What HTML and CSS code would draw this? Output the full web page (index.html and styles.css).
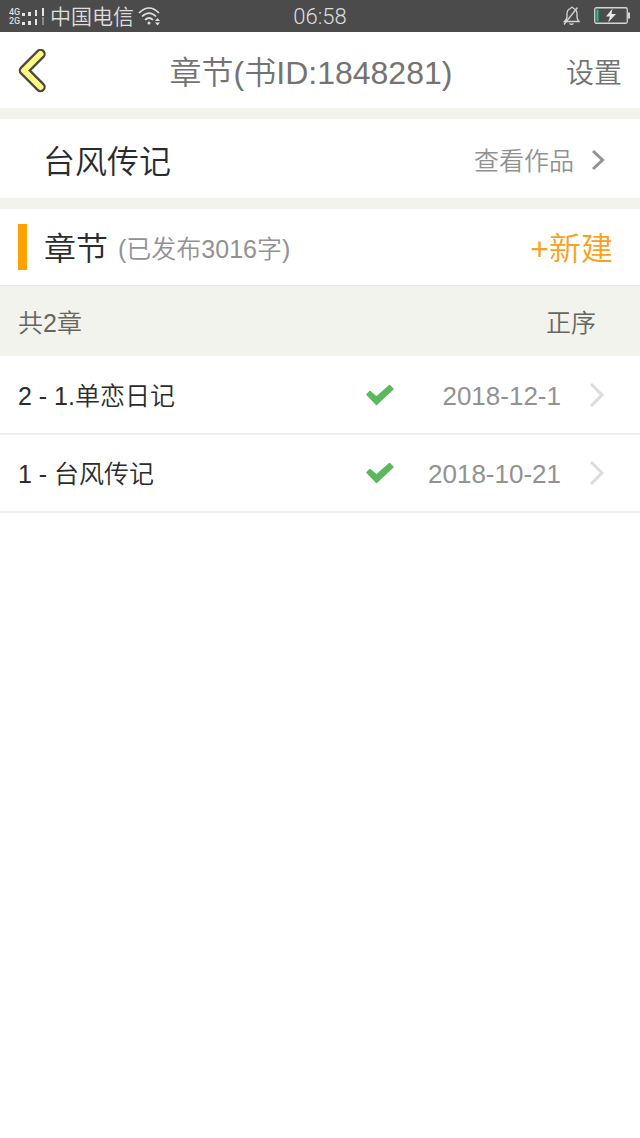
FILE: index.html
```html
<!DOCTYPE html>
<html lang="zh-CN">
<head>
<meta charset="utf-8">
<meta name="viewport" content="width=device-width, initial-scale=1">
<title>章节</title>
<link rel="stylesheet" href="styles.css">
</head>
<body>
<div class="status">
  <div class="status-left">
    <div class="networks">
      <div class="network"><span>4G</span><svg width="23" height="8" viewBox="0 0 23 8" fill="#e4e4e4"><path d="M0 5h3v3H0zM6 4h3v4H6zM13 2h2v6h-2zM20 0h2v8h-2z"/></svg></div>
      <div class="network"><span>2G</span><svg width="23" height="8" viewBox="0 0 23 8" fill="#e4e4e4"><path d="M0 5h3v3H0zM6 4h3v4H6zM13 2h2v6h-2z"/><path d="M20 0h2v8h-2z" opacity=".4"/></svg></div>
    </div>
    <span class="carrier">中国电信</span>
    <svg class="wifi" width="23" height="20" viewBox="0 0 23 20" fill="none" stroke="#dedede" stroke-width="1.7"><path d="M1 7Q11 -3 21 7M4 10.500Q11 3.500 18 10.500M7 14Q11 10 15 14"/><circle cx="11" cy="17" r="1.500" fill="#dedede" stroke="none"/><path d="M17 15l2.500-3 2.500 3zM17 16.500l2.500 3 2.500-3z" fill="#dedede" stroke="none"/></svg>
  </div>
  <span class="time">06:58</span>
  <div class="status-right">
    <svg width="18" height="20" viewBox="0 0 18 20" fill="none" stroke="#d5d5d5" stroke-width="1.300"><path d="M1.500 15.500h14.500q-1.500-2-2-4V8q0-4.500-3.500-5.500Q9-.2 7.500 2.500 4 3.500 4 8v3.500q-.5 2-2.500 4zM6.500 17.500q2 1.500 4 0M1 18.500L14.500 1.500"/></svg>
    <svg width="37" height="18" viewBox="0 0 37 18"><rect x=".75" y=".75" width="32.500" height="15.500" rx="1.500" fill="none" stroke="#d5d5d5" stroke-width="1.300"/><path d="M34 5.500h2v6h-2z" fill="#d5d5d5"/><path d="M2.500 2.500h2v12h-2z" fill="#27c08b"/><path d="M18.500 1.500L12 9.500h4L14 15.500l8-8.500h-4.500z" fill="#e8e8e8"/></svg>
  </div>
</div>
<header class="header">
  <button class="back" type="button" aria-label="返回"><svg width="28" height="46" viewBox="0 0 28 46" fill="none" stroke-linecap="round" stroke-linejoin="round"><path d="M22.500 5L6 21.500 22.500 38" stroke="#49483c" stroke-width="10.500"/><path d="M22.500 5L6 21.500 22.500 38" stroke="#fff884" stroke-width="6"/></svg></button>
  <h1 class="title">章节(书ID:1848281)</h1>
  <a class="settings" href="#settings">设置</a>
</header>
<main>
  <section class="book">
    <h2 class="heading">台风传记</h2>
    <a class="view" href="#work"><span class="label">查看作品</span><svg width="14" height="22" viewBox="0 0 14 22" fill="none" stroke="#929292" stroke-width="3"><path d="M1 2l9.500 9L1 20"/></svg></a>
  </section>
  <section class="chapters">
    <div class="chapters-title"><h2 class="heading">章节</h2><span class="count">(已发布3016字)</span></div>
    <button class="new" type="button">+新建</button>
  </section>
  <div class="sort"><span>共2章</span><button class="order" type="button">正序</button></div>
  <ul class="list">
    <li><a class="item" href="#chapter-2"><span class="name">2 - 1.单恋日记</span><svg class="check" width="30" height="24" viewBox="0 0 30 24"><path d="M2 11.500L5 8.500 11.500 14 24.500 2.500 28 6 11.500 21.500z" fill="#5cb85c" stroke="#5cb85c" stroke-width="1.500" stroke-linejoin="round"/></svg><time class="date" datetime="2018-12-01">2018-12-1</time><svg class="arrow" width="16" height="24" viewBox="0 0 16 24" fill="none" stroke="#dcdcdc" stroke-width="3"><path d="M1 1l11 11L1 23"/></svg></a></li>
    <li><a class="item" href="#chapter-1"><span class="name">1 - 台风传记</span><svg class="check" width="30" height="24" viewBox="0 0 30 24"><path d="M2 11.500L5 8.500 11.500 14 24.500 2.500 28 6 11.500 21.500z" fill="#5cb85c" stroke="#5cb85c" stroke-width="1.500" stroke-linejoin="round"/></svg><time class="date" datetime="2018-10-21">2018-10-21</time><svg class="arrow" width="16" height="24" viewBox="0 0 16 24" fill="none" stroke="#dcdcdc" stroke-width="3"><path d="M1 1l11 11L1 23"/></svg></a></li>
  </ul>
</main>
</body>
</html>
```
FILE: styles.css
```css
* { box-sizing: border-box; }
body {
  margin: 0;
  background: #fff;
  color: #2b2b2b;
  font-family: "Liberation Sans", "Noto Sans CJK SC", sans-serif;
  font-weight: 350;
  font-size: 25px;
  line-height: 36px;
}
h1, h2, ul { margin: 0; padding: 0; font-weight: inherit; }
a { color: inherit; text-decoration: none; }
button { padding: 0; border: 0; background: none; color: inherit; font: inherit; cursor: pointer; }
svg { display: block; flex: none; }
.status {
  display: grid;
  grid-template-columns: 1fr auto 1fr;
  align-items: center;
  height: 32px;
  padding: 0 9px;
  background: #4b4b4b;
  color: #dedede;
  font-family: Roboto, "Noto Sans CJK SC", sans-serif;
}
.status-left, .status-right { display: flex; align-items: center; }
.status-right { justify-content: flex-end; gap: 13px; }
.networks { display: grid; gap: 1px; }
.network { display: flex; align-items: center; gap: 1px; font-size: 9px; line-height: 8px; font-weight: 500; }
.network span { width: 12px; }
.carrier { margin: 0 4px 0 5px; padding-top: 2px; font-size: 21px; line-height: 30px; }
.time { padding-top: 2px; font-size: 22px; line-height: 30px; }
.header {
  display: flex;
  align-items: center;
  justify-content: space-between;
  height: 76px;
  padding: 4px 18px 0;
  color: #737373;
}
.back { width: 38px; }
.title { padding-top: 2px; font-size: 32px; line-height: 48px; }
.settings { padding-top: 4px; font-size: 28px; line-height: 40px; }
.heading { padding-top: 4px; font-size: 32px; line-height: 42px; }
.book, .chapters, .sort {
  display: flex;
  align-items: center;
  justify-content: space-between;
}
.book {
  height: 101px;
  padding: 2px 34px 0 43px;
  border-top: 11px solid #f2f3ed;
  border-bottom: 11px solid #f2f3ed;
}
.view { display: flex; align-items: center; gap: 18px; color: #929292; }
.label, .name { padding-top: 2px; }
.chapters { height: 76px; padding: 0 27px 0 18px; }
.chapters-title { display: flex; align-items: center; padding-left: 17px; border-left: 9px solid #ffa200; }
.count { margin-left: 10px; padding-top: 4px; color: #929292; }
.new { padding-top: 4px; color: #f9a11b; font-size: 32px; line-height: 42px; }
.sort {
  height: 71px;
  padding: 4px 44px 0 18px;
  border-top: 1px solid #eaeae8;
  background: #f2f3ed;
  color: #666660;
}
.list { padding-top: 1px; list-style: none; }
.item {
  display: grid;
  grid-template-columns: 1fr 30px 166px 45px;
  align-items: center;
  min-height: 78px;
  padding: 0 34px 0 18px;
  border-bottom: 2px solid #ececec;
}
.date { padding-top: 2px; color: #929292; font-size: 26px; text-align: right; }
.arrow { justify-self: end; }
```
